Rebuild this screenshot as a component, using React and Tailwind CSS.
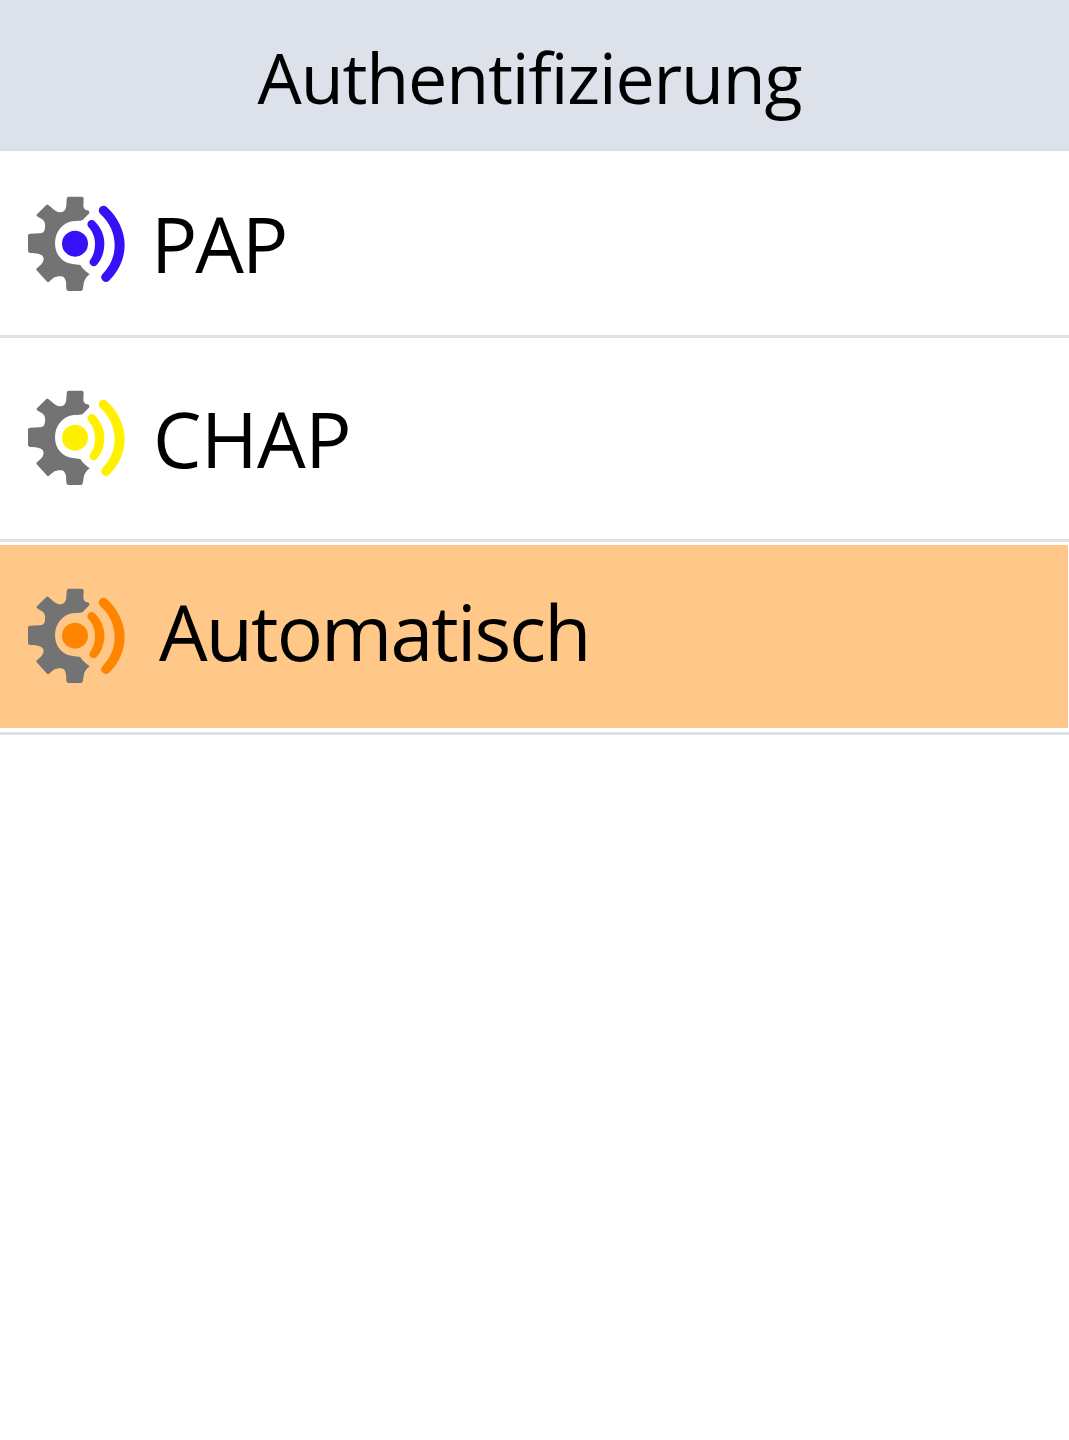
import React, { useState } from "react";

const options = [
  {
    name: "PAP",
    color: "#3412f5",
    rowClass: "h-[184px] pt-[45px]",
    textClass: "pt-[8px] pl-[26px] tracking-[-2px]"
  },
  {
    name: "CHAP",
    color: "#fff000",
    rowClass: "h-[201px] pt-[52px]",
    textClass: "pt-[9px] pl-[28px] tracking-[-0.6px]"
  },
  {
    name: "Automatisch",
    color: "#ff8400",
    rowClass: "h-[183px] pt-[43px]",
    textClass: "pt-[4px] pl-[34px] tracking-[-1.9px]"
  }
];

const GearSignalIcon = ({ color }) => (
  <svg viewBox="24 32 291 288" className="w-[97px] h-[96px] shrink-0" fill="none">
    <path
      fill="#737373"
      d="M146 34H185Q191 34 191 41L190 62Q192 74 202 75Q209 75 208 84L188 104C179 108 173 106 162 107C128 110 105 139 105 174C105 209 128 233 158 236L181 239Q186 250 209 267C197 276 192 286 191 295L188 313Q186 317 181 317H145Q139 316 139 310L138 289C135 279 132 274 124 273C116 272 108 274 101 277L86 290Q83 292 80 288L50 255Q47 252 51 249L64 237C70 229 73 221 69 214C65 206 52 204 30 203Q24 202 24 197V150Q24 145 30 145L60 144C71 144 75 135 75 126C76 116 75 107 65 101L51 93Q48 90 51 87L79 59Q82 56 86 60L102 73C108 78 115 81 122 81C134 80 138 71 139 60L140 41Q141 34 146 34Z"
    />
    <circle cx="165" cy="175" r="39" fill={color} />
    <path
      fill={color}
      d="M224 108C243 127 253 150 253 174C253 200 245 223 230 239A12.500 12.500 0 0 1 211 223C220 211 225 196 225 175C225 156 218 139 206 126A12.500 12.500 0 0 1 224 108Z"
    />
    <path
      fill={color}
      d="M260 65C294 96 314 138 314 179C314 219 297 257 267 286A14 14 0 0 1 246 268C272 242 284 212 284 179C284 144 269 112 241 86A13.500 13.500 0 0 1 260 65Z"
    />
  </svg>
);

export default function AuthenticationMenu() {
  const [selected, setSelected] = useState("Automatisch");

  return (
    <div className="min-h-screen bg-white text-black font-['Open_Sans',sans-serif]">
      <header className="h-[151px] pt-[37px] pr-[10px] bg-[#dde1e9] border-b border-[#d8dde1]">
        <h1 className="text-center text-[70px] leading-[80px] tracking-[-1.15px]">Authentifizierung</h1>
      </header>
      <ul>
        {options.map((option) => {
          const active = selected === option.name;
          return (
            <li
              key={option.name}
              className={`border-b-3 border-[#dde1e9] ${active ? "pt-[3px] pb-[4px] pr-px" : ""}`}
            >
              <button
                onClick={() => setSelected(option.name)}
                className={`flex items-start w-full pl-7 text-left ${option.rowClass} ${active ? "bg-[#ffc788]" : ""}`}
              >
                <GearSignalIcon color={option.color} />
                <span className={`text-[77px] leading-[80px] ${option.textClass}`}>{option.name}</span>
              </button>
            </li>
          );
        })}
      </ul>
    </div>
  );
}
